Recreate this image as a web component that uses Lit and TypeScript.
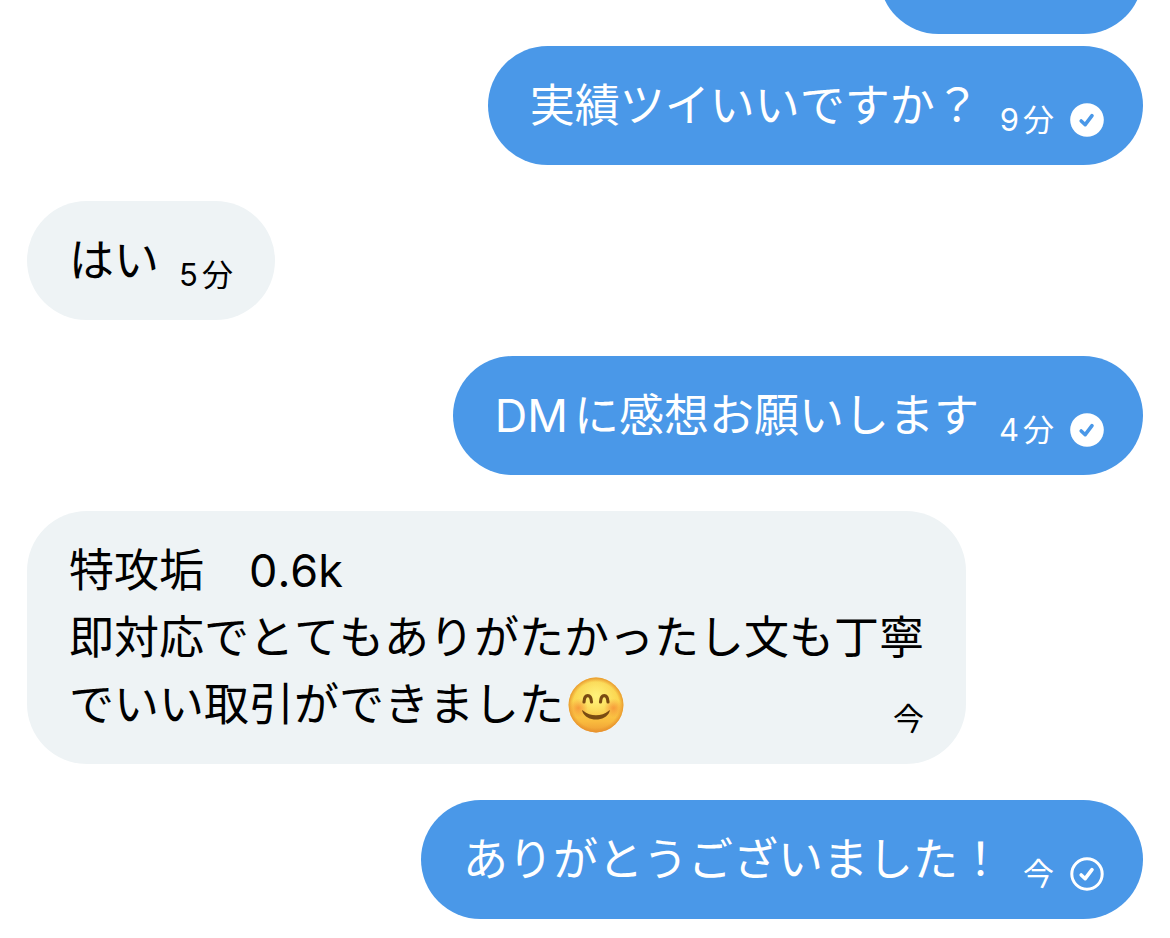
import { LitElement, html, css, svg, nothing } from "lit";
import { customElement, property } from "lit/decorators.js";

type Status = "seen" | "sent";

interface Message {
  from: "me" | "them";
  lines: string[];
  time?: string;
  status?: Status;
  emoji?: boolean;
  grouped?: boolean;
}

const messages: Message[] = [
  { from: "me", lines: [], grouped: true },
  { from: "me", lines: ["実績ツイいいですか？"], time: "9分", status: "seen" },
  { from: "them", lines: ["はい"], time: "5分" },
  { from: "me", lines: ["DMに感想お願いします"], time: "4分", status: "seen" },
  {
    from: "them",
    lines: ["特攻垢　0.6k", "即対応でとてもありがたかったし文も丁寧", "でいい取引ができました"],
    emoji: true,
    time: "今",
  },
  { from: "me", lines: ["ありがとうございました！"], time: "今", status: "sent" },
];

// Opens a small gap between a leading Latin run and the Japanese text after it.
function spaced(text: string) {
  const match = /^([A-Za-z0-9]+)(.+)$/.exec(text);
  return match ? html`<span class="latin">${match[1]}</span>${match[2]}` : text;
}

@customElement("status-icon")
export class StatusIcon extends LitElement {
  @property() status: Status = "sent";

  static styles = css`
    :host { display: block; width: 34px; height: 34px; }
    .icon { display: block; width: 100%; height: 100%; }
    .disc { fill: #fff; }
    .ring { fill: none; stroke: #fff; stroke-width: 3; }
    .tick { fill: none; stroke: #fff; stroke-width: 3.6; stroke-linecap: round; stroke-linejoin: round; }
    .tick.on-disc { stroke: #4a98e8; }
  `;

  render() {
    const seen = this.status === "seen";
    return html`<svg class="icon" viewBox="0 0 34 34" role="img" aria-label=${seen ? "既読" : "送信済み"}>
      ${seen
        ? svg`<circle class="disc" cx="17" cy="17" r="16.8" />`
        : svg`<circle class="ring" cx="17" cy="17" r="15.2" />`}
      <path class="tick ${seen ? "on-disc" : ""}" d="M11.200 18l4 3.700 6.800-9" />
    </svg>`;
  }
}

@customElement("smile-emoji")
export class SmileEmoji extends LitElement {
  static styles = css`
    :host { display: block; width: 56px; height: 56px; }
    .face { display: block; width: 100%; height: 100%; }
  `;

  render() {
    return html`<svg class="face" viewBox="0 0 56 56" role="img" aria-label="😊">
      <defs>
        <linearGradient id="skin" x1="0" y1="0" x2="0" y2="1">
          <stop offset="0" stop-color="#f8cb45" />
          <stop offset="0.45" stop-color="#fcd850" />
          <stop offset="0.8" stop-color="#f9bb3e" />
          <stop offset="1" stop-color="#ee9c34" />
        </linearGradient>
        <radialGradient id="shine" cx="0.5" cy="0.34" r="0.42">
          <stop offset="0" stop-color="#fff27c" />
          <stop offset="1" stop-color="#fff27c" stop-opacity="0" />
        </radialGradient>
        <radialGradient id="rim" cx="0.5" cy="0.5" r="0.5">
          <stop offset="0.84" stop-color="#e8932c" stop-opacity="0" />
          <stop offset="1" stop-color="#e58e2b" stop-opacity="0.85" />
        </radialGradient>
        <radialGradient id="blush">
          <stop offset="0" stop-color="#f58a35" stop-opacity="0.75" />
          <stop offset="1" stop-color="#f58a35" stop-opacity="0" />
        </radialGradient>
      </defs>
      <circle cx="28" cy="28" r="27.4" fill="url(#skin)" />
      <circle cx="28" cy="28" r="27.4" fill="url(#shine)" />
      <circle cx="28" cy="28" r="27.4" fill="url(#rim)" />
      <circle cx="10.500" cy="31" r="9.500" fill="url(#blush)" />
      <circle cx="45.500" cy="31" r="9.500" fill="url(#blush)" />
      <g fill="none" stroke="#7a4b12" stroke-width="3.2" stroke-linecap="round">
        <path d="M16 25c.5-8.400 7-8.400 7.500 0" />
        <path d="M32.500 25c.5-8.400 7-8.400 7.500 0" />
      </g>
      <path d="M14.400 34.400c4 10.800 23.200 10.800 27.200 0 .6-1 .2-1.400-.8-.7-7.200 6-18.400 6-25.600 0-1-.7-1.400-.3-.8.7z" fill="#7a4b12" />
    </svg>`;
  }
}

@customElement("app-root")
export class AppRoot extends LitElement {
  static styles = css`
    :host {
      display: block;
      background: #fff;
      font-family: Inter, "Noto Sans CJK JP", sans-serif;
      font-kerning: none;
      color: #000;
    }
    .thread {
      box-sizing: border-box;
      height: 100vh;
      margin: 0;
      padding: 0 27px 19px;
      overflow: hidden;
      list-style: none;
      display: flex;
      flex-direction: column;
      justify-content: flex-end;
    }
    .message {
      flex: none;
      box-sizing: border-box;
      min-height: 119px;
      max-width: 90%;
      margin-top: 36px;
      padding: 26px 42px;
      border-radius: 60px;
      font-size: 45px;
      line-height: 67px;
    }
    .them { align-self: flex-start; background: #eef3f5; }
    .me { align-self: flex-end; background: #4a98e8; color: #fff; padding-right: 39px; }
    .grouped { min-width: 264px; }
    .grouped + .message { margin-top: 12px; }
    .line { display: flex; justify-content: space-between; }
    .text { display: flex; align-items: center; }
    .latin { margin-right: 6px; }
    .emoji { margin-left: 4px; }
    .meta {
      align-self: flex-end;
      display: flex;
      align-items: center;
      gap: 16px;
      margin-left: 20px;
      font-size: 31px;
      line-height: 38px;
    }
    .meta .latin { margin-right: 4px; }
  `;

  private renderMeta(m: Message) {
    return html`<span class="meta">
      <time>${spaced(m.time ?? "")}</time>
      ${m.status ? html`<status-icon .status=${m.status}></status-icon>` : nothing}
    </span>`;
  }

  private renderMessage(m: Message) {
    const last = m.lines.length - 1;
    return html`<li class="message ${m.from} ${m.grouped ? "grouped" : ""}">
      ${m.lines.map(
        (line, i) => html`<div class="line">
          <span class="text">${spaced(line)}${m.emoji && i === last
            ? html`<smile-emoji class="emoji"></smile-emoji>`
            : nothing}</span>
          ${i === last ? this.renderMeta(m) : nothing}
        </div>`
      )}
    </li>`;
  }

  render() {
    return html`<ol class="thread">${messages.map((m) => this.renderMessage(m))}</ol>`;
  }
}
